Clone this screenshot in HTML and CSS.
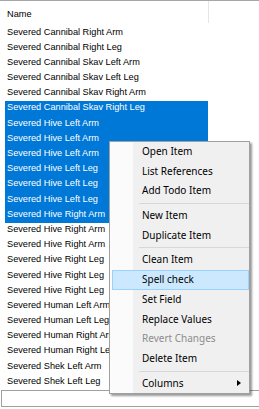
FILE: index.html
```html
<!DOCTYPE html>
<html>
<head>
<meta charset="utf-8">
<link rel="stylesheet" href="styles.css">
</head>
<body>
<div class="app">
  <div class="list">
    <div class="header">
      <div class="col-name">Name</div>
      <div class="col-rest"></div>
    </div>
    <div class="rows">
      <div class="row">Severed Cannibal Right Arm</div>
      <div class="row">Severed Cannibal Right Leg</div>
      <div class="row">Severed Cannibal Skav Left Arm</div>
      <div class="row">Severed Cannibal Skav Left Leg</div>
      <div class="row">Severed Cannibal Skav Right Arm</div>
      <div class="row sel">Severed Cannibal Skav Right Leg</div>
      <div class="row sel">Severed Hive Left Arm</div>
      <div class="row sel">Severed Hive Left Arm</div>
      <div class="row sel">Severed Hive Left Arm</div>
      <div class="row sel">Severed Hive Left Leg</div>
      <div class="row sel">Severed Hive Left Leg</div>
      <div class="row sel">Severed Hive Left Leg</div>
      <div class="row sel">Severed Hive Right Arm</div>
      <div class="row">Severed Hive Right Arm</div>
      <div class="row">Severed Hive Right Arm</div>
      <div class="row">Severed Hive Right Leg</div>
      <div class="row">Severed Hive Right Leg</div>
      <div class="row">Severed Hive Right Leg</div>
      <div class="row">Severed Human Left Arm</div>
      <div class="row">Severed Human Left Leg</div>
      <div class="row">Severed Human Right Arm</div>
      <div class="row">Severed Human Right Leg</div>
      <div class="row">Severed Shek Left Arm</div>
      <div class="row">Severed Shek Left Leg</div>
    </div>
  </div>
  <div class="footer"></div>

  <div class="menu">
    <div class="gutter"></div>
    <div class="item">Open Item</div>
    <div class="item">List References</div>
    <div class="item">Add Todo Item</div>
    <div class="sep"></div>
    <div class="item">New Item</div>
    <div class="item">Duplicate Item</div>
    <div class="sep"></div>
    <div class="item">Clean Item</div>
    <div class="item hover">Spell check</div>
    <div class="item">Set Field</div>
    <div class="item">Replace Values</div>
    <div class="item disabled">Revert Changes</div>
    <div class="item">Delete Item</div>
    <div class="sep"></div>
    <div class="item sub">Columns<span class="arrow"></span></div>
  </div>
</div>
</body>
</html>
```

FILE: styles.css
```css
html, body {
  margin: 0;
  padding: 0;
  background: #ffffff;
}
body {
  width: 259px;
  height: 409px;
  overflow: hidden;
  font-family: "Liberation Sans", Arial, sans-serif;
  color: #000;
}
.app {
  position: relative;
  width: 259px;
  height: 409px;
  display: flex;
  flex-direction: column;
}
.list {
  border-top: 1px solid #a6a6a6;
}
.header {
  display: flex;
  height: 24.5px;
  align-items: flex-start;
}
.col-name {
  width: 201px;
  padding-left: 7px;
  padding-top: 7.8px;
  padding-bottom: 4.2px;
  line-height: 10px;
  font-size: 9.2px;
  border-right: 1px solid #e5e5e5;
}
.col-rest {
  flex: 1;
}
.rows {
  display: flex;
  flex-direction: column;
}
.row {
  box-sizing: border-box;
  height: 15.2px;
  line-height: 12px;
  padding-bottom: 3.2px;
  margin-left: 5px;
  width: 203px;
  padding-left: 2px;
  font-size: 9.2px;
  white-space: nowrap;
  color: #000;
}
.row.sel {
  background: #0078d7;
  color: #ffffff;
}
.footer {
  margin-top: 0;
  margin-left: 1px;
  height: 15px;
  border-top: 1px solid #a0a0a0;
  border-left: 1px solid #a0a0a0;
  border-bottom: 1px solid #a0a0a0;
}

/* context menu overlay */
.menu {
  position: absolute;
  left: 109px;
  top: 141px;
  width: 139px;
  border: 1px solid #a0a0a0;
  background: #f0f0f0;
  box-shadow: 2px 2px 2px rgba(0, 0, 0, 0.4);
  font-family: "Noto Sans", "Open Sans", sans-serif;
  font-size: 10px;
  display: flex;
  flex-direction: column;
}
.gutter {
  position: absolute;
  left: 0;
  top: 0;
  bottom: 0;
  width: 23px;
  background: #fbfbfb;
}
.item {
  position: relative;
  box-sizing: border-box;
  height: 19.7px;
  line-height: 19.7px;
  margin: 0 0 0 2px;
  padding-left: 30px;
  color: #000;
  white-space: nowrap;
  display: flex;
  align-items: center;
}
.item.hover {
  background: #cce8ff;
  border: 1px solid #99d1ff;
  padding-left: 29px;
}
.item.disabled {
  color: #8d8d8d;
}
.sep {
  position: relative;
  height: 5px;
  margin-left: 29px;
  display: flex;
  align-items: center;
}
.sep::before {
  content: "";
  display: block;
  width: 100%;
  height: 1px;
  background: #d7d7d7;
}
.arrow {
  position: absolute;
  left: 125px;
  top: 6.5px;
  width: 0;
  height: 0;
  border-top: 3.5px solid transparent;
  border-bottom: 3.5px solid transparent;
  border-left: 4px solid #000;
}
```
